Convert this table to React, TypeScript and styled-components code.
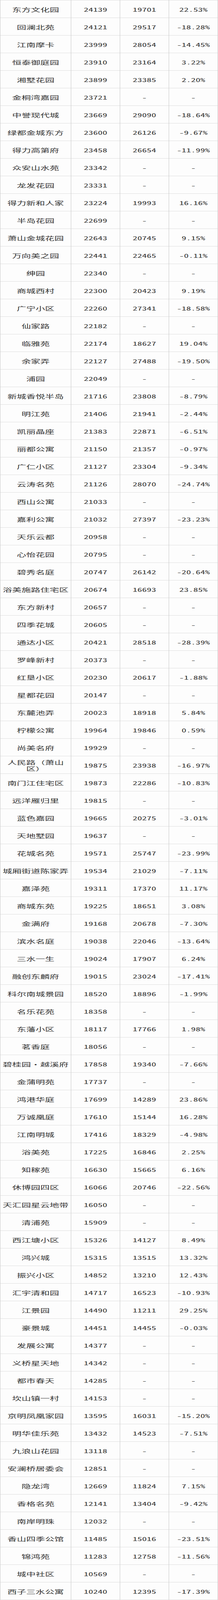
import React from 'react';
import styled, { createGlobalStyle } from 'styled-components';

type Row = [string, string, string, string];

// 名称 / 本期均价 / 上期均价 / 涨跌幅
const ROWS: Row[] = [
  ['东方文化园', '24139', '19701', '22.53%'],
  ['回澜北苑', '24121', '29517', '-18.28%'],
  ['江南摩卡', '23999', '28054', '-14.45%'],
  ['恒泰御庭园', '23910', '23164', '3.22%'],
  ['湘墅花园', '23899', '23385', '2.20%'],
  ['金桐湾嘉园', '23721', '-', '-'],
  ['中誉现代城', '23669', '29090', '-18.64%'],
  ['绿都金城东方', '23600', '26126', '-9.67%'],
  ['得力高第府', '23458', '26654', '-11.99%'],
  ['众安山水苑', '23342', '-', '-'],
  ['龙发花园', '23331', '-', '-'],
  ['得力新和人家', '23224', '19993', '16.16%'],
  ['半岛花园', '22699', '-', '-'],
  ['萧山金城花园', '22643', '20745', '9.15%'],
  ['万向美之园', '22441', '22465', '-0.11%'],
  ['绅园', '22340', '-', '-'],
  ['商城西村', '22300', '20423', '9.19%'],
  ['广宁小区', '22260', '27341', '-18.58%'],
  ['仙家路', '22182', '-', '-'],
  ['临雅苑', '22174', '18627', '19.04%'],
  ['余家弄', '22127', '27488', '-19.50%'],
  ['浦园', '22049', '-', '-'],
  ['新城香悦半岛', '21716', '23808', '-8.79%'],
  ['明江苑', '21406', '21941', '-2.44%'],
  ['凯丽晶座', '21383', '22871', '-6.51%'],
  ['丽都公寓', '21150', '21357', '-0.97%'],
  ['广仁小区', '21127', '23304', '-9.34%'],
  ['云涛名苑', '21126', '28070', '-24.74%'],
  ['西山公寓', '21033', '-', '-'],
  ['嘉利公寓', '21032', '27397', '-23.23%'],
  ['天乐云都', '20958', '-', '-'],
  ['心怡花园', '20795', '-', '-'],
  ['碧秀名庭', '20747', '26142', '-20.64%'],
  ['浴美施路住宅区', '20674', '16693', '23.85%'],
  ['东方新村', '20657', '-', '-'],
  ['四季花城', '20605', '-', '-'],
  ['通达小区', '20421', '28518', '-28.39%'],
  ['罗峰新村', '20373', '-', '-'],
  ['红垦小区', '20230', '20617', '-1.88%'],
  ['星都花园', '20147', '-', '-'],
  ['东麓池弄', '20023', '18918', '5.84%'],
  ['柠檬公寓', '19964', '19846', '0.59%'],
  ['尚美名府', '19929', '-', '-'],
  ['人民路（萧山区）', '19875', '23938', '-16.97%'],
  ['南门江住宅区', '19873', '22286', '-10.83%'],
  ['远洋雁归里', '19815', '-', '-'],
  ['蓝色嘉园', '19665', '20275', '-3.01%'],
  ['天地墅园', '19637', '-', '-'],
  ['花城名苑', '19571', '25747', '-23.99%'],
  ['城厢街道陈家弄', '19534', '21029', '-7.11%'],
  ['嘉泽苑', '19311', '17370', '11.17%'],
  ['商城东苑', '19225', '18651', '3.08%'],
  ['金满府', '19168', '20678', '-7.30%'],
  ['滨水名庭', '19038', '22046', '-13.64%'],
  ['三水一生', '19024', '17907', '6.24%'],
  ['融创东麟府', '19015', '23024', '-17.41%'],
  ['科尔南城景园', '18520', '18896', '-1.99%'],
  ['名乐花苑', '18358', '-', '-'],
  ['东藩小区', '18117', '17766', '1.98%'],
  ['茗香庭', '18056', '-', '-'],
  ['碧桂园·越溪府', '17858', '19340', '-7.66%'],
  ['金蒲明苑', '17737', '-', '-'],
  ['鸿港华庭', '17699', '14289', '23.86%'],
  ['万诚凰庭', '17610', '15144', '16.28%'],
  ['江南明城', '17416', '18329', '-4.98%'],
  ['浴美苑', '17225', '16846', '2.25%'],
  ['知稼苑', '16630', '15665', '6.16%'],
  ['休博园四区', '16066', '20746', '-22.56%'],
  ['天汇园星云地带', '16050', '-', '-'],
  ['清浦苑', '15909', '-', '-'],
  ['西江塘小区', '15326', '14127', '8.49%'],
  ['鸿兴城', '15315', '13515', '13.32%'],
  ['振兴小区', '14852', '13210', '12.43%'],
  ['汇宇清和园', '14717', '16523', '-10.93%'],
  ['江景园', '14490', '11211', '29.25%'],
  ['豪景城', '14451', '14455', '-0.03%'],
  ['发展公寓', '14377', '-', '-'],
  ['义桥星天地', '14342', '-', '-'],
  ['都市春天', '14285', '-', '-'],
  ['坎山镇一村', '14153', '-', '-'],
  ['京明凤凰家园', '13595', '16031', '-15.20%'],
  ['明华佳乐苑', '13432', '14523', '-7.51%'],
  ['九浪山花园', '13118', '-', '-'],
  ['安澜桥居委会', '12851', '-', '-'],
  ['隐龙湾', '12669', '11824', '7.15%'],
  ['香格名苑', '12141', '13404', '-9.42%'],
  ['南岸明珠', '12032', '-', '-'],
  ['香山四季公馆', '11485', '15016', '-23.51%'],
  ['锦鸿苑', '11283', '12758', '-11.56%'],
  ['城中社区', '10569', '-', '-'],
  ['西子三水公寓', '10240', '12395', '-17.39%'],
];

const VIEW_H = 4096;
const FULL_H = 7281;
const FIT = VIEW_H / FULL_H;

const GlobalStyle = createGlobalStyle`
  html, body {
    margin: 0;
    padding: 0;
    background: #fdfdfd;
  }
`;

const Frame = styled.div`
  width: 557px;
  height: ${VIEW_H}px;
  overflow: hidden;
`;

const Table = styled.div`
  width: 557px;
  box-sizing: border-box;
  border-right: 1px solid #c6c6c6;
  border-bottom: 1px solid #c6c6c6;
  background: #fdfdfd;
  color: #333;
  transform: scaleY(${FIT});
  transform-origin: top left;
`;

const Row = styled.div`
  display: grid;
  grid-template-columns: 181px 125px 125px 125px;
  height: 80px;
`;

const Cell = styled.div`
  box-sizing: border-box;
  border-top: 1px solid #c6c6c6;
  border-left: 1px solid #c6c6c6;
  display: flex;
  align-items: center;
  justify-content: center;
  text-align: center;
  padding: 3px 4px 0;
  font-family: "Noto Sans CJK SC", "Noto Sans", sans-serif;
  font-size: 24px;
  line-height: 29px;
`;

const NameCell = styled(Cell)`
  line-break: strict;
`;

const NumCell = styled(Cell)`
  white-space: nowrap;
  font-feature-settings: "hwid" 1;
`;

const App = () => (
  <>
    <GlobalStyle />
    <Frame>
      <Table>
        {ROWS.map(([name, price, prev, change], i) => (
          <Row key={i}>
            <NameCell>{name}</NameCell>
            <NumCell>{price}</NumCell>
            <NumCell>{prev}</NumCell>
            <NumCell>{change}</NumCell>
          </Row>
        ))}
      </Table>
    </Frame>
  </>
);

export default App;
